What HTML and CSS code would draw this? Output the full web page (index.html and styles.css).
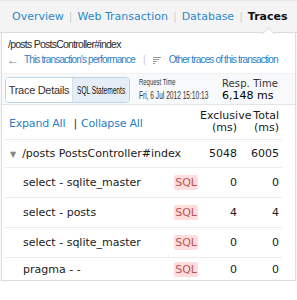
FILE: index.html
```html
<!DOCTYPE html>
<html lang="en">
<head>
    <meta charset="UTF-8">
    <title>Traces</title>
    <link rel="stylesheet" href="styles.css">
</head>
<body>

    <div class="tabs">
        <a class="tab">Overview</a>
        <span class="sep">|</span>
        <a class="tab">Web Transaction</a>
        <span class="sep">|</span>
        <a class="tab">Database</a>
        <span class="sep">|</span>
        <a class="tab active">Traces</a>
    </div>

    <div class="panel">
        <div class="title">
            <h3>/posts PostsController#index</h3>
            <div class="links">
                <span class="arrow">&larr;</span>
                <a>This transaction's performance</a>
                <span class="sep">|</span>
                <svg class="filter" width="8" height="7" viewBox="0 0 8 7">
                    <rect x="0" y="0" width="8" height="1" fill="#999"/>
                    <rect x="0" y="2" width="6" height="1" fill="#999"/>
                    <rect x="0" y="4" width="4" height="1" fill="#999"/>
                    <rect x="0" y="6" width="2" height="1" fill="#999"/>
                </svg>
                <a>Other traces of this transaction</a>
            </div>
        </div>

        <div class="summary">
            <div class="toggle">
                <span class="seg">Trace Details</span>
                <span class="seg on"><span class="squeeze">SQL Statements</span></span>
            </div>
            <div class="req">
                <span class="squeeze tiny">Request Time</span>
                <span class="squeeze">Fri, 6 Jul 2012 15:10:13</span>
            </div>
            <div class="resp">
                <span>Resp. Time</span>
                <b>6,148 ms</b>
            </div>
        </div>

        <div class="trace">
            <div class="row head">
                <div class="name">
                    <a>Expand All </a><span class="bar">|</span><a>Collapse All</a>
                </div>
                <div class="badge-col"></div>
                <div class="num">Exclusive<br>(ms)</div>
                <div class="num">Total<br>(ms)</div>
            </div>
            <div class="row root">
                <div class="name"><span class="tri">&#9660;</span>/posts PostsController#index</div>
                <div class="badge-col"></div>
                <div class="num">5048</div>
                <div class="num">6005</div>
            </div>
            <div class="row">
                <div class="name">select - sqlite_master</div>
                <div class="badge-col"><span class="sql">SQL</span></div>
                <div class="num">0</div>
                <div class="num">0</div>
            </div>
            <div class="row">
                <div class="name">select - posts</div>
                <div class="badge-col"><span class="sql">SQL</span></div>
                <div class="num">4</div>
                <div class="num">4</div>
            </div>
            <div class="row">
                <div class="name">select - sqlite_master</div>
                <div class="badge-col"><span class="sql">SQL</span></div>
                <div class="num">0</div>
                <div class="num">0</div>
            </div>
            <div class="row last">
                <div class="name">pragma - -</div>
                <div class="badge-col"><span class="sql">SQL</span></div>
                <div class="num">0</div>
                <div class="num">0</div>
            </div>
        </div>
    </div>

</body>
</html>
```

FILE: styles.css
```css
body {
    margin: 0;
    font-family: "DejaVu Sans", Verdana, sans-serif;
    font-size: 11px;
    color: #1a1a1a;
    background: #fff;
}

a {
    color: #2a7fc4;
}

/* top navigation */
.tabs {
    display: flex;
    align-items: stretch;
    height: 31px;
    padding-left: 12px;
    background: #f4f4f4;
    border-top: 1px solid #e8e8e8;
    border-bottom: 1px solid #dcdcdc;
    line-height: 31px;
    white-space: nowrap;
}
.tabs .sep {
    color: #d0d0d0;
    margin: 0 5px;
}
.tab {
    color: #2a87c9;
    position: relative;
}
.tab.active {
    color: #111;
    font-weight: bold;
}
.tab.active::after {
    content: "";
    position: absolute;
    left: 50%;
    bottom: -6px;
    width: 8px;
    height: 8px;
    margin-left: -4px;
    background: #fff;
    border-left: 1px solid #dcdcdc;
    border-top: 1px solid #dcdcdc;
    transform: rotate(45deg);
}

/* content panel */
.panel {
    margin: 0 1px;
    border: 1px solid #dedede;
    border-top: none;
    box-shadow: 0 6px 10px rgba(0, 0, 0, 0.07);
}

.title {
    padding: 4px 4px 6px 4px;
    font-family: "Liberation Sans", Arial, sans-serif;
    font-size: 10px;
    letter-spacing: -0.85px;
    white-space: nowrap;
}
.title h3 {
    margin: 0 0 0 2px;
    font-size: 10.5px;
    font-weight: normal;
    color: #2a2a2a;
    line-height: 14px;
    letter-spacing: -0.75px;
}
.links {
    display: flex;
    align-items: center;
    margin-top: 2px;
    line-height: 14px;
}
.links .arrow {
    color: #888;
    font-size: 12px;
    letter-spacing: 0;
    margin: 0 5px 0 1px;
}
.links .sep {
    color: #ccc;
    margin: 0 8px 0 8px;
}
.links .filter {
    margin-right: 8px;
}

/* summary strip */
.summary {
    display: flex;
    align-items: center;
    padding: 3px 3px 1px 3px;
    background: #f8f9fa;
    border-top: 1px solid #f0f0f0;
    border-bottom: 1px solid #e4e4e4;
    white-space: nowrap;
}
.toggle {
    display: flex;
    flex: none;
    border: 1px solid #bcd4e8;
    border-radius: 4px;
    overflow: hidden;
    height: 24px;
}
.seg {
    display: flex;
    align-items: center;
    justify-content: center;
    width: 66px;
    background: #fff;
    color: #333;
    font-family: "Liberation Sans", Arial, sans-serif;
    font-size: 11px;
    letter-spacing: -0.3px;
}
.seg.on {
    width: 57px;
    justify-content: flex-start;
    padding-left: 4px;
    box-sizing: border-box;
    background: #e5eef6;
    color: #111;
    border-left: 1px solid #d5e2ee;
    letter-spacing: 0;
}
.seg.on .squeeze {
    transform: scaleX(0.6);
}
.squeeze {
    display: inline-block;
    transform: scaleX(0.66);
    transform-origin: left center;
}
.req {
    display: flex;
    flex-direction: column;
    flex: none;
    width: 66px;
    margin-left: 9px;
    font-family: "Liberation Sans", Arial, sans-serif;
    font-size: 10px;
    line-height: 13px;
    color: #333;
    margin-top: -3px;
}
.req .tiny {
    font-size: 9px;
}
.resp {
    display: flex;
    flex-direction: column;
    margin-left: 17px;
    font-size: 10px;
    line-height: 12px;
    color: #333;
    letter-spacing: 0.1px;
}
.resp b {
    font-weight: normal;
    font-size: 11px;
    color: #000;
    letter-spacing: 0;
}

/* trace table */
.trace {
    margin: 0 13px 0 3px;
}
.row {
    display: grid;
    grid-template-columns: minmax(0, 1fr) 30px 40px 42px;
    align-items: center;
    height: 29px;
    border-bottom: 1px solid #ececec;
    white-space: nowrap;
}
.row.head {
    height: 34px;
}
.row.root {
    height: 27px;
}
.row.last {
    border-bottom: none;
    height: 22px;
}
.name {
    padding-left: 18px;
}
.head .name {
    padding-left: 4px;
    padding-top: 2px;
    letter-spacing: -0.2px;
}
.head .bar {
    margin: 0 4px 0 5px;
    color: #333;
}
.root .name {
    padding-left: 5px;
}
.tri {
    color: #888;
    font-size: 8px;
    margin-right: 6px;
}
.num {
    text-align: right;
    padding-right: 3px;
}
.head .num {
    line-height: 12px;
}
.badge-col {
    justify-self: end;
    padding-right: 2px;
}
.sql {
    background: #fdd;
    color: #b55;
    padding: 1px 1px;
    border-radius: 2px;
}
```
